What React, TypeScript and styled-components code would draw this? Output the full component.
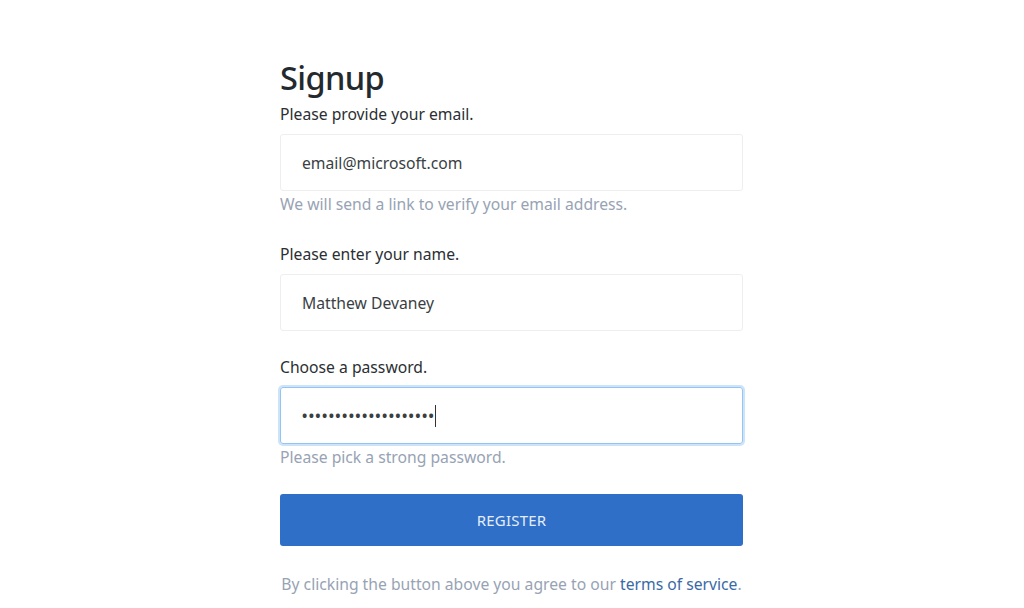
import React from "react";
import styled, { createGlobalStyle } from "styled-components";

const Global = createGlobalStyle`
  html, body { margin: 0; padding: 0; background: #ffffff; }
  body { font-family: "Noto Sans", "Open Sans", sans-serif; color: #2b2f33; }
  * { box-sizing: border-box; }
`;

const Page = styled.div`
  display: flex;
  justify-content: center;
  padding: 56px 1px 0 0;
`;

const Form = styled.form`
  width: 463px;
  display: flex;
  flex-direction: column;
`;

const Title = styled.h1`
  margin: 0;
  font-size: 32.5px;
  font-weight: 500;
  line-height: 44px;
  letter-spacing: -0.6px;
  color: #24292e;
`;

const Label = styled.label<{ $top?: number }>`
  display: block;
  margin-top: ${(p) => p.$top ?? 0}px;
  font-size: 15.7px;
  line-height: 24px;
  color: #2b2f33;
`;

const Field = styled.div<{ $focused?: boolean }>`
  margin-top: 8px;
  height: 57px;
  display: flex;
  align-items: center;
  padding: 0 21px;
  border: 1px solid ${(p) => (p.$focused ? "#94c4f0" : "#eeeeee")};
  border-radius: 3px;
  box-shadow: ${(p) => (p.$focused ? "0 0 0 2px #cde3f9" : "none")};
  font-size: 15.7px;
  color: #3a3f44;
`;

const Dots = styled.span`
  font-size: 14px;
  font-weight: 700;
  letter-spacing: 1.4px;
  color: #3a3f44;
`;

const Caret = styled.span`
  display: inline-block;
  width: 1px;
  height: 22px;
  background: #333;
`;

const Help = styled.div`
  margin-top: 1px;
  font-size: 15.7px;
  line-height: 24px;
  color: #97a3b4;
`;

const Button = styled.button`
  margin-top: 25px;
  height: 52px;
  border: none;
  border-radius: 3px;
  background: #2f6fc7;
  color: #e4edf9;
  font-family: inherit;
  font-size: 15px;
  letter-spacing: 0.2px;
  cursor: pointer;
`;

const Terms = styled.p`
  margin: 26px 0 0;
  text-align: center;
  white-space: nowrap;
  font-size: 15.7px;
  line-height: 24px;
  color: #97a3b4;
`;

const Link = styled.a`
  color: #3a6aa6;
  text-decoration: none;
`;

export default function App() {
  return (
    <>
      <Global />
      <Page>
        <Form onSubmit={(e) => e.preventDefault()}>
          <Title>Signup</Title>
          <Label $top={2}>Please provide your email.</Label>
          <Field>email@microsoft.com</Field>
          <Help>We will send a link to verify your email address.</Help>
          <Label $top={26}>Please enter your name.</Label>
          <Field>Matthew Devaney</Field>
          <Label $top={24}>Choose a password.</Label>
          <Field $focused>
            <Dots>{"•".repeat(20)}</Dots>
            <Caret />
          </Field>
          <Help>Please pick a strong password.</Help>
          <Button type="submit">REGISTER</Button>
          <Terms>
            By clicking the button above you agree to our{" "}
            <Link href="#">terms of service</Link>.
          </Terms>
        </Form>
      </Page>
    </>
  );
}
